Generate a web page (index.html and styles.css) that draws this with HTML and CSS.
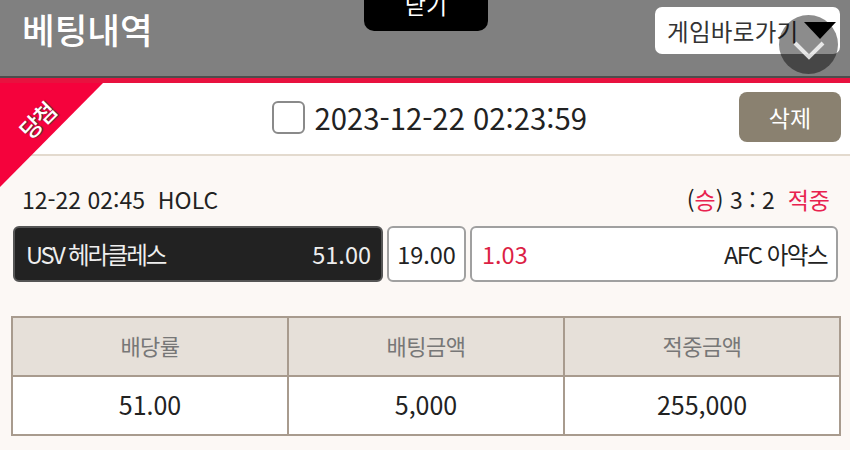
FILE: index.html
```html
<!DOCTYPE html>
<html lang="ko">
<head>
    <meta charset="UTF-8">
    <meta name="viewport" content="width=device-width, initial-scale=1.0">
    <title>베팅내역</title>
    <link rel="stylesheet" href="styles.css">
</head>
<body>
    <div class="header">
        <h1>베팅내역</h1>
        <div class="game-select">
            <span>게임바로가기</span>
            <span class="select-arrow"></span>
        </div>
    </div>
    <button class="close-btn">닫기</button>
    <div class="scroll-down">
        <svg width="32" height="20" viewBox="0 0 32 20">
            <path d="M2 3 L16 17 L30 3" fill="none" stroke="#fff" stroke-opacity="0.8" stroke-width="4"/>
        </svg>
    </div>

    <div class="ticket">
        <div class="ribbon"><span>당첨</span></div>
        <div class="ticket-head">
            <div class="ticket-date">
                <span class="check"></span>
                <span>2023-12-22 02:23:59</span>
            </div>
            <button class="delete-btn">삭제</button>
        </div>

        <div class="match-info">
            <span>12-22 02:45&nbsp; HOLC</span>
            <span>(<em>승</em>) 3 : 2&nbsp; <em>적중</em></span>
        </div>

        <div class="bet-row">
            <div class="bet-cell home">
                <span class="team home-team">USV 헤라클레스</span>
                <span>51.00</span>
            </div>
            <div class="bet-cell draw">19.00</div>
            <div class="bet-cell away">
                <span class="odd-red">1.03</span>
                <span class="team">AFC 아약스</span>
            </div>
        </div>

        <table class="result">
            <thead>
                <tr>
                    <th>배당률</th>
                    <th>배팅금액</th>
                    <th>적중금액</th>
                </tr>
            </thead>
            <tbody>
                <tr>
                    <td>51.00</td>
                    <td>5,000</td>
                    <td>255,000</td>
                </tr>
            </tbody>
        </table>
    </div>
</body>
</html>
```

FILE: styles.css
```css
* {
    margin: 0;
    padding: 0;
    box-sizing: border-box;
}

body {
    font-family: "Noto Sans CJK KR", "Noto Sans", sans-serif;
    background-color: #fcf8f5;
    color: #222;
    overflow: hidden;
}

.header {
    height: 83px;
    background-color: #808080;
    border-bottom: 5px solid #e8123f;
    box-shadow: inset 0 -2px 0 #4d4d4d;
    display: flex;
    justify-content: space-between;
    padding: 7px 10px 0 22px;
}

.header h1 {
    font-size: 35.5px;
    font-weight: 500;
    line-height: 44px;
    color: #fff;
}

.game-select {
    width: 185px;
    height: 47px;
    background-color: #fff;
    border-radius: 7px;
    display: flex;
    align-items: center;
    justify-content: space-between;
    padding: 0 4px 0 12px;
    font-size: 23.5px;
    letter-spacing: 0.3px;
    color: #333;
}

.select-arrow {
    width: 0;
    height: 0;
    border-left: 16px solid transparent;
    border-right: 16px solid transparent;
    border-top: 17px solid #000;
}

.close-btn {
    position: absolute;
    left: 364px;
    top: -10px;
    width: 124px;
    height: 41px;
    background-color: #000;
    color: #fff;
    border: none;
    border-radius: 10px;
    padding-bottom: 13px;
    font-family: inherit;
    font-size: 23px;
    line-height: 22px;
}

.scroll-down {
    position: absolute;
    left: 779px;
    top: 15px;
    width: 59px;
    height: 59px;
    border-radius: 50%;
    background-color: rgba(0, 0, 0, 0.45);
    display: flex;
    align-items: center;
    justify-content: center;
    padding-top: 11px;
}

.ribbon {
    position: absolute;
    left: 0;
    top: 83px;
    width: 103px;
    height: 104px;
    background-color: #f5023c;
    clip-path: polygon(0 0, 100% 0, 0 100%);
}

.ribbon span {
    position: absolute;
    left: 17px;
    top: 22px;
    color: #fff;
    font-size: 23px;
    font-weight: 500;
    line-height: 30px;
    letter-spacing: -1.5px;
    text-shadow: 1px 1px 1px #333;
    transform: rotate(-45deg);
}

.ticket-head {
    height: 73px;
    background-color: #fff;
    border-bottom: 2px solid #e3dace;
    display: flex;
    align-items: center;
    justify-content: flex-end;
    padding: 0 9px 3px 0;
}

.ticket-date {
    display: flex;
    align-items: center;
    gap: 9px;
    font-size: 29.3px;
    line-height: 40px;
    margin-right: 152px;
}

.check {
    width: 33px;
    height: 33px;
    background-color: #fff;
    border: 2px solid #8a8a8a;
    border-radius: 6px;
}

.delete-btn {
    width: 102px;
    height: 50px;
    background-color: #8a8170;
    color: #fff;
    border: none;
    border-radius: 8px;
    font-family: inherit;
    font-size: 23px;
}

.match-info {
    display: flex;
    justify-content: space-between;
    padding: 27px 20px 0 22px;
    font-size: 23px;
    line-height: 32px;
}

.match-info em {
    font-style: normal;
    color: #e8224f;
}

.bet-row {
    display: flex;
    gap: 4px;
    padding: 11px 12px 0 13px;
}

.bet-cell {
    height: 56px;
    display: flex;
    align-items: center;
    justify-content: space-between;
    font-size: 23.5px;
    background-color: #fff;
    border: 2px solid #a0a0a0;
    border-radius: 6px;
    padding: 0 9px 0 10px;
}

.bet-cell.home {
    width: 370px;
    background-color: #222;
    border-color: #555;
    color: #eee;
    padding-left: 11px;
    padding-right: 10px;
}

.bet-cell.draw {
    width: 79px;
    justify-content: center;
    padding: 0;
}

.bet-cell.away {
    flex: 1;
}

.team {
    letter-spacing: -1.5px;
}

.team.home-team {
    letter-spacing: -2.2px;
}

.odd-red {
    color: #dc1f45;
}

.result {
    width: 830px;
    margin: 34px 0 0 11px;
    border-collapse: collapse;
    table-layout: fixed;
    border: 2px solid #a89b8e;
}

.result th,
.result td {
    height: 59px;
    border: 2px solid #a89b8e;
    text-align: center;
    padding-bottom: 3px;
}

.result th {
    background-color: #e6e0d9;
    font-size: 22px;
    font-weight: 400;
    letter-spacing: -0.5px;
    color: #777;
}

.result td {
    background-color: #fff;
    font-size: 25px;
}
```
